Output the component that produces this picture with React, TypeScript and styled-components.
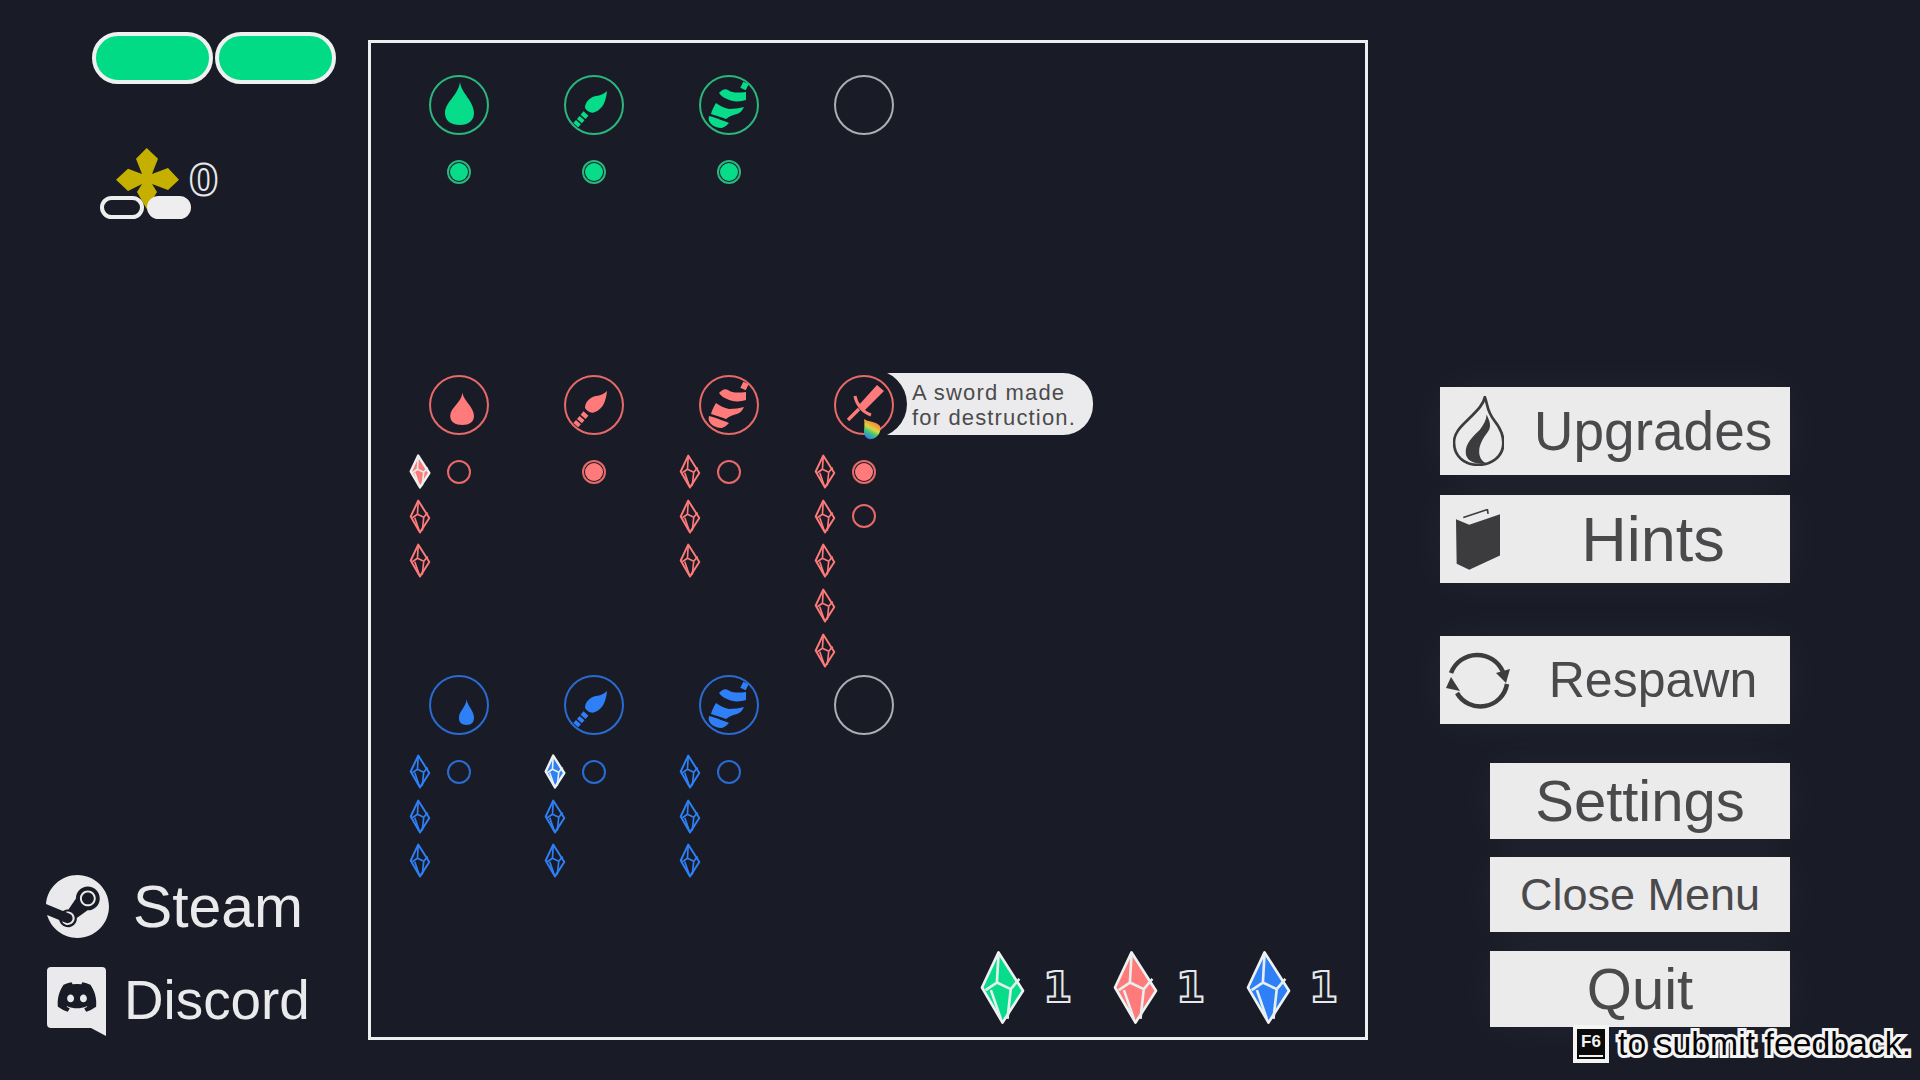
import React from "react";
import styled, { createGlobalStyle } from "styled-components";
import { FaSteam, FaDiscord } from "react-icons/fa";

const BG = "#191c26";
const SANS = `"Liberation Sans", Arial, sans-serif`;
const DEJA = `"DejaVu Sans", sans-serif`;

type Tone = "green" | "red" | "blue" | "none";
const TONES: Record<Tone, { fill: string; ring: string }> = {
  green: { fill: "#07dc8b", ring: "#2bb67d" },
  red: { fill: "#ff7a7a", ring: "#e8696a" },
  blue: { fill: "#2f80f7", ring: "#2a6bd2" },
  none: { fill: "transparent", ring: "#aeadb4" },
};

const Global = createGlobalStyle`
  html, body { margin: 0; padding: 0; background: ${BG}; overflow: hidden; }
  #root { width: 1920px; height: 1080px; }
`;

const Page = styled.div`
  position: relative;
  width: 1920px;
  height: 1080px;
  display: flex;
  background: ${BG};
  overflow: hidden;
`;

const LeftColumn = styled.aside`
  width: 368px;
  height: 1080px;
  display: flex;
  flex-direction: column;
  box-sizing: border-box;
  padding: 32px 0 44px 0;
`;

const HealthRow = styled.div`
  display: flex;
  gap: 2px;
  margin-left: 92px;
`;

const HealthPill = styled.div`
  width: 121px;
  height: 52px;
  box-sizing: border-box;
  border: 4px solid #eef1f0;
  border-radius: 26px;
  background: #02db86;
`;

const CurrencyRow = styled.div`
  display: flex;
  align-items: flex-start;
  margin: 64px 0 0 100px;
`;

const Emblem = styled.div`
  position: relative;
  width: 92px;
  height: 71px;
  display: flex;
  align-items: flex-end;
  gap: 3px;
`;

const CloverMark = styled.svg`
  position: absolute;
  left: 16px;
  top: 0;
  width: 63px;
  height: 61px;
`;

const MiniPill = styled.div<{ $on?: boolean }>`
  position: relative;
  width: 44px;
  height: 23px;
  box-sizing: border-box;
  border: 4px solid #eeeeef;
  border-radius: 12px;
  background: ${(p) => (p.$on ? "#eeeeef" : BG)};
`;

const Outlined = styled.span`
  font-family: ${DEJA};
  font-weight: 700;
  font-size: 42px;
  line-height: 48px;
  color: ${BG};
  -webkit-text-stroke: 2px #e8e8ea;
`;

const CurrencyCount = styled(Outlined)`
  margin: 9px 0 0 -3px;
`;

const Links = styled.nav`
  margin-top: auto;
  display: flex;
  flex-direction: column;
  gap: 24px;
`;

const LinkRow = styled.a<{ $gap: number }>`
  display: flex;
  align-items: center;
  gap: ${(p) => p.$gap}px;
  margin-left: 45px;
  color: #eaeaec;
  font-family: ${SANS};
`;

const LinkLabel = styled.span<{ $size: number }>`
  font-size: ${(p) => p.$size}px;
  line-height: 64px;
`;

const SteamMark = styled(FaSteam)`
  width: 65px;
  height: 65px;
  color: #eaeaec;
`;

const DiscordBadge = styled.div`
  position: relative;
  width: 62px;
  height: 70px;
  margin: 3px 0 0 1px;
`;

const DiscordBubble = styled.svg`
  width: 62px;
  height: 70px;
  display: block;
`;

const DiscordFace = styled(FaDiscord)`
  position: absolute;
  left: 10px;
  top: 10px;
  width: 42px;
  height: 42px;
  color: ${BG};
`;

const Board = styled.main`
  width: 1000px;
  height: 1000px;
  margin-top: 40px;
  box-sizing: border-box;
  border: 3px solid #eceef0;
  display: grid;
`;

const Tree = styled.div`
  grid-area: 1 / 1;
  padding: 32px 0 0 21px;
  display: flex;
  flex-direction: column;
`;

const TreeRow = styled.div`
  display: flex;
  height: 300px;
`;

const Cell = styled.div`
  position: relative;
  width: 135px;
  display: flex;
  flex-direction: column;
  align-items: stretch;
`;

const Medal = styled.div<{ $tone: Tone }>`
  position: relative;
  z-index: 2;
  width: 60px;
  height: 60px;
  align-self: flex-start;
  margin-left: 37px;
  box-sizing: border-box;
  border: 2px solid ${(p) => TONES[p.$tone].ring};
  border-radius: 50%;
`;

const MedalArt = styled.svg<{ $tone: Tone }>`
  position: absolute;
  left: -1px;
  top: -1px;
  width: 58px;
  height: 58px;
  overflow: visible;
  fill: ${(p) => TONES[p.$tone].fill};
  stroke: ${(p) => TONES[p.$tone].fill};
  stroke-width: 0;
`;

const Slots = styled.div`
  display: flex;
  gap: 17px;
  padding: 20px 0 0 18px;
`;

const SlotColumn = styled.div<{ $width: number }>`
  width: ${(p) => p.$width}px;
  display: flex;
  flex-direction: column;
  align-items: center;
  gap: 11.67px;
`;

const Slot = styled.div`
  height: 33px;
  display: flex;
  align-items: center;
  justify-content: center;
`;

const Dot = styled.div<{ $tone: Tone; $filled?: boolean }>`
  width: 24px;
  height: 24px;
  box-sizing: border-box;
  padding: 1px;
  border: 2px solid ${(p) => TONES[p.$tone].ring};
  border-radius: 50%;
  background: ${(p) => (p.$filled ? TONES[p.$tone].fill : "transparent")};
  background-clip: content-box;
`;

const GemArt = styled.svg<{ $w: number; $h: number }>`
  display: block;
  width: ${(p) => p.$w}px;
  height: ${(p) => p.$h}px;
  overflow: visible;
`;

const Tooltip = styled.div`
  position: absolute;
  z-index: 1;
  left: 63px;
  top: -2px;
  width: 233px;
  height: 62px;
  box-sizing: border-box;
  padding: 7px 0 0 52px;
  border-radius: 30px;
  background: #ebebed;
  color: #4b4b4d;
  font-family: ${SANS};
  font-size: 22px;
  line-height: 25px;
  letter-spacing: 1.15px;
  white-space: pre;
  &::before {
    content: "";
    position: absolute;
    left: -21px;
    top: -3px;
    width: 68px;
    height: 68px;
    border-radius: 50%;
    background: ${BG};
  }
`;

const TooltipText = styled.span`
  position: relative;
`;

const Tally = styled.div`
  grid-area: 1 / 1;
  align-self: end;
  justify-self: end;
  display: flex;
  gap: 45px;
  padding: 0 30px 13px 0;
`;

const TallyItem = styled.div`
  display: flex;
  align-items: center;
  gap: 22px;
`;

const TallyCount = styled(Outlined)`
  width: 23px;
  margin-top: 0;
  display: flex;
  justify-content: center;
`;

const Menu = styled.section`
  flex: 1;
  display: flex;
  flex-direction: column;
  align-items: flex-end;
  box-sizing: border-box;
  padding: 387px 130px 0 0;
`;

const MenuButton = styled.button<{ $wide?: boolean; $h: number; $top: number; $size: number }>`
  display: flex;
  align-items: center;
  width: ${(p) => (p.$wide ? 350 : 300)}px;
  height: ${(p) => p.$h}px;
  margin-top: ${(p) => p.$top}px;
  padding: 0;
  border: none;
  background: #ebebec;
  color: #4a4a4c;
  font-family: ${SANS};
  font-size: ${(p) => p.$size}px;
  box-shadow: 0 0 50px rgba(255, 255, 255, 0.045);
`;

const ButtonIcon = styled.span`
  width: 76px;
  flex: none;
  display: flex;
  align-items: center;
  justify-content: center;
`;

const ButtonText = styled.span<{ $lift?: boolean }>`
  flex: 1;
  text-align: center;
  margin-top: ${(p) => (p.$lift ? -2 : 0)}px;
`;

const Feedback = styled.div`
  position: absolute;
  left: 1573px;
  top: 1025px;
  display: flex;
  align-items: center;
  gap: 9px;
`;

const KeyCap = styled.div`
  position: relative;
  width: 36px;
  height: 38px;
  box-sizing: border-box;
  border: 4px solid #f4f4f4;
  background: #0a0a0a;
  color: #f2f2f2;
  font-family: ${SANS};
  font-weight: 700;
  font-size: 17px;
  line-height: 25px;
  text-align: center;
  &::after {
    content: "";
    position: absolute;
    left: 2px;
    right: 2px;
    bottom: 2px;
    height: 2px;
    background: #f2f2f2;
  }
`;

const FeedbackText = styled.span`
  font-family: ${SANS};
  font-size: 33.8px;
  line-height: 36px;
  margin-top: -3px;
  color: #050505;
  -webkit-text-stroke: 6px #f4f4f4;
  paint-order: stroke fill;
  white-space: nowrap;
`;

function Gem({ tone, w, h, mode }: { tone: Tone; w: number; h: number; mode: "outline" | "lit" | "solid" }) {
  const c = TONES[tone].fill;
  const outer = mode === "outline" ? TONES[tone].fill : "#eef2f2";
  const inner = mode === "outline" ? TONES[tone].fill : "#e6eeee";
  const body = mode === "outline" ? "none" : c;
  const sw = mode === "outline" ? 13 : mode === "lit" ? 16 : 8;
  const inSw = mode === "outline" ? 11 : mode === "lit" ? 11 : 8;
  return (
    <GemArt $w={w} $h={h} viewBox="0 0 130 220">
      <path d="M53 4 L127 120 L65 216 L3 110 Z" fill={body} stroke={outer} strokeWidth={sw} strokeLinejoin="round" />
      <path
        d="M53 10 L48 95 L14 118 M48 95 L90 115 L116 84 M90 115 L80 205 M30 118 L60 205"
        fill="none"
        stroke={inner}
        strokeWidth={inSw}
        strokeLinejoin="round"
      />
    </GemArt>
  );
}

const DROP = "M30 6 C31 17 44 25 44 37 C44 45 38 49 30 49 C21 49 15 45 15 37 C15 26 28 20 30 6 Z";

function Art({ kind, tone, level }: { kind: string; tone: Tone; level?: number }) {
  if (kind === "drop") {
    const t =
      level === 1 ? undefined : level === 2 ? "translate(44 49) scale(.82 .75) translate(-44 -49)" : "translate(44 49) scale(.52 .6) translate(-44 -49)";
    return (
      <MedalArt $tone={tone} viewBox="0 0 58 58">
        <path d={DROP} transform={t} />
      </MedalArt>
    );
  }
  if (kind === "brush") {
    return (
      <MedalArt $tone={tone} viewBox="0 0 58 58">
        <path d="M42 15 C41 25 38 33 30 36 C26 38 22 35 20 32 C20 26 25 21 31 20 C35 19.5 39 18 42 15 Z" />
        <path d="M21 37.5 L10.5 49.5" fill="none" stroke="inherit" strokeWidth="6.5" strokeDasharray="4.5 1.5 4 1.5 4" />
      </MedalArt>
    );
  }
  if (kind === "waves") {
    return (
      <MedalArt $tone={tone} viewBox="0 0 58 58">
        <path d="M46 7 L43 13" fill="none" stroke="inherit" strokeWidth="6" />
        <path d="M19 17 C22 14 25 12 28 14 C32 17 38 17 46 16 L46 24 C40 26 32 26 27 23 C24 22 21 20 19 17 Z" />
        <path d="M16 27 C20 30 24 32 29 33 C34 33 40 32 44 31 C42 35 40 37 37 38 C33 39 30 40 26 43 C22 41 16 40 11 38 C12 34 14 30 16 27 Z" />
        <path d="M9 40 C13 41 17 42 21 44 C24 45 27 46 29 47 C27 49 25 51 22 52 C17 52 13 50 11 48 C9 46 8 43 9 40 Z" />
      </MedalArt>
    );
  }
  return (
    <MedalArt $tone={tone} viewBox="0 0 58 58">
      <defs>
        <linearGradient id="rainbow" x1="0.75" y1="0" x2="0.3" y2="1">
          <stop offset="0" stopColor="#f2605f" />
          <stop offset="0.3" stopColor="#f3a23c" />
          <stop offset="0.5" stopColor="#d8d83e" />
          <stop offset="0.7" stopColor="#3ec77a" />
          <stop offset="1" stopColor="#3a78ee" />
        </linearGradient>
      </defs>
      <path d="M42 9 L49 15 L28 36 L23 30 Z" />
      <path d="M20 20 C21 27 27 36 36 39" fill="none" stroke="inherit" strokeWidth="3" />
      <path d="M24 33 L13 44" fill="none" stroke="inherit" strokeWidth="3.4" />
      <path d="M29 43 C33 46 41 45 45 50 C47 56 42 62 37 63 C32 64 29 60 29 56 C29 52 30 48 29 43 Z" fill="url(#rainbow)" />
    </MedalArt>
  );
}

type CellData = {
  kind?: string;
  level?: number;
  tone: Tone;
  gems?: number;
  lit?: boolean;
  dots?: boolean[];
  tip?: boolean;
};

const rows: CellData[][] = [
  [
    { kind: "drop", level: 1, tone: "green", dots: [true] },
    { kind: "brush", tone: "green", dots: [true] },
    { kind: "waves", tone: "green", dots: [true] },
    { tone: "none" },
  ],
  [
    { kind: "drop", level: 2, tone: "red", gems: 3, lit: true, dots: [false] },
    { kind: "brush", tone: "red", dots: [true] },
    { kind: "waves", tone: "red", gems: 3, dots: [false] },
    { kind: "sword", tone: "red", gems: 5, dots: [true, false], tip: true },
  ],
  [
    { kind: "drop", level: 3, tone: "blue", gems: 3, dots: [false] },
    { kind: "brush", tone: "blue", gems: 3, lit: true, dots: [false] },
    { kind: "waves", tone: "blue", gems: 3, dots: [false] },
    { tone: "none" },
  ],
];

const tallies: Tone[] = ["green", "red", "blue"];

function TreeCell({ cell }: { cell: CellData }) {
  return (
    <Cell>
      <Medal $tone={cell.tone}>{cell.kind && <Art kind={cell.kind} tone={cell.tone} level={cell.level} />}</Medal>
      {cell.tip && (
        <Tooltip>
          <TooltipText>{"A sword made\nfor destruction."}</TooltipText>
        </Tooltip>
      )}
      <Slots>
        <SlotColumn $width={20}>
          {Array.from({ length: cell.gems ?? 0 }).map((_, i) => (
            <Slot key={i}>
              <Gem tone={cell.tone} w={20} h={33} mode={cell.lit && i === 0 ? "lit" : "outline"} />
            </Slot>
          ))}
        </SlotColumn>
        <SlotColumn $width={24}>
          {(cell.dots ?? []).map((on, i) => (
            <Slot key={i}>
              <Dot $tone={cell.tone} $filled={on} />
            </Slot>
          ))}
        </SlotColumn>
      </Slots>
    </Cell>
  );
}

export default function App() {
  return (
    <Page>
      <Global />
      <LeftColumn>
        <HealthRow>
          <HealthPill />
          <HealthPill />
        </HealthRow>
        <CurrencyRow>
          <Emblem>
            <CloverMark viewBox="0 0 63 61">
              <path
                fill="#c5b000"
                d="M30.7 0 L42 10.7 L36 26 L52 20 L63 31.7 L52 42 L36 36 L41 44 L30.7 61 L21 44 L26 36 L12 43 L0 31.7 L12 20.7 L26 26 L20 10.7 Z"
              />
            </CloverMark>
            <MiniPill />
            <MiniPill $on />
          </Emblem>
          <CurrencyCount>0</CurrencyCount>
        </CurrencyRow>
        <Links>
          <LinkRow $gap={23}>
            <SteamMark />
            <LinkLabel $size={58.8}>Steam</LinkLabel>
          </LinkRow>
          <LinkRow $gap={16}>
            <DiscordBadge>
              <DiscordBubble viewBox="0 0 62 70">
                <path
                  fill="#eaeaec"
                  d="M5 1 H56 Q60 1 60 5 V70 L45 62 H5 Q1 62 1 58 V5 Q1 1 5 1 Z"
                />
              </DiscordBubble>
              <DiscordFace />
            </DiscordBadge>
            <LinkLabel $size={54.8}>Discord</LinkLabel>
          </LinkRow>
        </Links>
      </LeftColumn>

      <Board>
        <Tree>
          {rows.map((row, r) => (
            <TreeRow key={r}>
              {row.map((cell, c) => (
                <TreeCell key={c} cell={cell} />
              ))}
            </TreeRow>
          ))}
        </Tree>
        <Tally>
          {tallies.map((t) => (
            <TallyItem key={t}>
              <Gem tone={t} w={43} h={73} mode="solid" />
              <TallyCount>1</TallyCount>
            </TallyItem>
          ))}
        </Tally>
      </Board>

      <Menu>
        <MenuButton $wide $h={88} $top={0} $size={55}>
          <ButtonIcon>
            <svg width="51" height="70" viewBox="0 0 152 208">
              <path
                d="M95 3 C105 30 100 45 125 75 C145 100 150 120 150 140 C150 180 115 205 75 205 C35 205 3 180 3 138 C3 105 30 85 55 60 C75 40 90 25 95 3 Z"
                fill="#ebebec"
                stroke="#3c3c3e"
                strokeWidth="8"
              />
              <path
                d="M100 55 C110 75 115 90 105 105 C95 120 78 140 78 165 C78 180 85 195 100 200 C70 205 40 195 38 170 C36 140 60 120 80 100 C92 85 100 70 100 55 Z"
                fill="#3c3c3e"
              />
            </svg>
          </ButtonIcon>
          <ButtonText>Upgrades</ButtonText>
        </MenuButton>
        <MenuButton $wide $h={88} $top={20} $size={63}>
          <ButtonIcon>
            <svg width="44" height="61" viewBox="0 0 133 183">
              <path d="M0 30 L40 47 L133 15 L133 140 L40 183 L2 165 Z" fill="#3c3c3e" />
              <path d="M22 25 L95 1 L97 14" stroke="#3c3c3e" strokeWidth="5" fill="none" />
            </svg>
          </ButtonIcon>
          <ButtonText>Hints</ButtonText>
        </MenuButton>
        <MenuButton $wide $h={88} $top={53} $size={50}>
          <ButtonIcon>
            <svg width="64" height="60" viewBox="0 0 64 60">
              <path d="M5 23 A28 28 0 0 1 57 22" fill="none" stroke="#3c3c3e" strokeWidth="4.5" />
              <path d="M11 43 A27 27 0 0 0 61 34" fill="none" stroke="#3c3c3e" strokeWidth="4.5" />
              <path d="M64 19 L50 23 L60 33 Z" fill="#3c3c3e" />
              <path d="M5 27 L0 38 L14 41 Z" fill="#3c3c3e" />
            </svg>
          </ButtonIcon>
          <ButtonText>Respawn</ButtonText>
        </MenuButton>
        <MenuButton $h={76} $top={39} $size={58}>
          <ButtonText $lift>Settings</ButtonText>
        </MenuButton>
        <MenuButton $h={75} $top={18} $size={45}>
          <ButtonText>Close Menu</ButtonText>
        </MenuButton>
        <MenuButton $h={76} $top={19} $size={58}>
          <ButtonText $lift>Quit</ButtonText>
        </MenuButton>
      </Menu>

      <Feedback>
        <KeyCap>F6</KeyCap>
        <FeedbackText>to submit feedback.</FeedbackText>
      </Feedback>
    </Page>
  );
}
